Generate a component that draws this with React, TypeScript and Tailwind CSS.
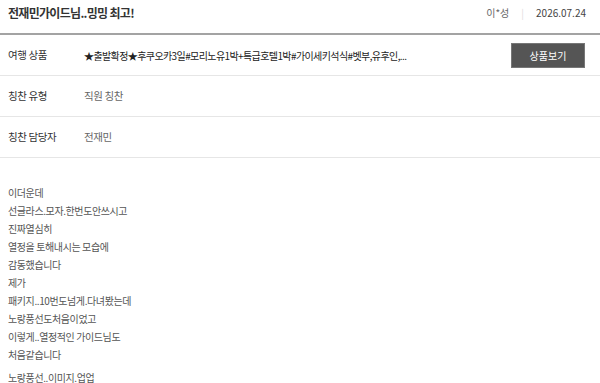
const content = [
    "이더운데",
    "선글라스.모자.한번도안쓰시고",
    "진짜열심히",
    "열정을 토해내시는 모습에",
    "감동했습니다",
    "제가",
    "패키지..10번도넘게.다녀봤는데",
    "노랑풍선도처음이었고",
    "이렇게..열정적인 가이드님도",
    "처음같습니다",
];

function InfoRow({ label, children }: { label: string; children: React.ReactNode }) {
    return (
        <div className="h-[41px] border-b border-[#e6e6e6] flex items-center pl-[8px] pr-[15px]">
            <div className="w-[76px] shrink-0 text-[10.5px] tracking-[-0.4px] text-[#333]">{label}</div>
            <div className="flex-1 flex items-center text-[10.5px] tracking-[-0.4px] text-[#666]">
                {children}
            </div>
        </div>
    );
}

export default function App() {
    return (
        <div
            className="w-[600px] h-[383px] overflow-hidden bg-white"
            style={{ fontFamily: '"Noto Sans CJK KR", "Noto Sans", sans-serif' }}
        >
            <div className="h-[33px] flex justify-between pt-[5px] pl-[8px] pr-[14px]">
                <h1 className="text-[12px] leading-[16px] font-bold text-[#333] tracking-[-0.7px]">
                    전재민가이드님..밍밍 최고!
                </h1>
                <div className="flex items-start text-[10px] leading-[16px] text-[#666]">
                    <span>이*성</span>
                    <span className="mx-[12px] text-[#ddd]">|</span>
                    <span className="text-[#444]">2026.07.24</span>
                </div>
            </div>
            <div className="h-[2px] bg-[#a3a3a3]"></div>
            <InfoRow label="여행 상품">
                <span className="flex-1 text-[10px] tracking-[-0.6px] text-[#222]">
                    ★출발확정★후쿠오카3일#모리노유1박+특급호텔1박#가이세키석식#벳부,유후인,...
                </span>
                <button className="w-[74px] h-[25px] bg-[#555] border border-[#777] text-white text-[10px] tracking-normal">
                    상품보기
                </button>
            </InfoRow>
            <InfoRow label="칭찬 유형">직원 칭찬</InfoRow>
            <InfoRow label="칭찬 담당자">전재민</InfoRow>
            <div className="pt-[26px] pl-[8px] text-[10px] leading-[18px] tracking-[-0.4px] text-[#555]">
                {content.map((line) => (
                    <div key={line}>{line}</div>
                ))}
                <div className="mt-[5px]">노랑풍선..이미지.업업</div>
            </div>
        </div>
    );
}
